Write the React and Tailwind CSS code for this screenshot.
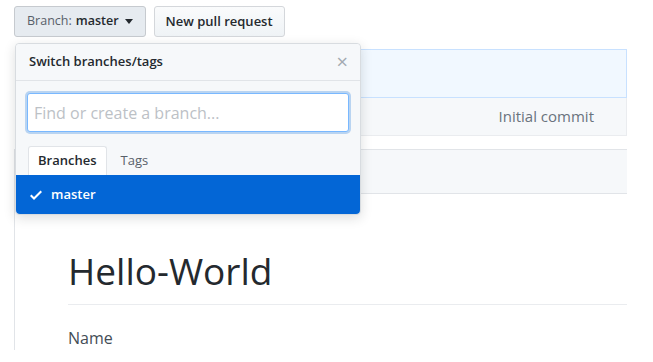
import React from 'react';

const Check = () => (
  <svg width="16" height="16" viewBox="0 0 12 16" fill="currentColor">
    <path fillRule="evenodd" d="M12 5l-8 8-4-4 1.5-1.5L4 10l6.5-6.5L12 5z" />
  </svg>
);

const App = () => {
  return (
    <div className="relative w-[653px] h-[362px] overflow-hidden bg-white text-[#24292e]" style={{ fontFamily: '"Open Sans", "Noto Sans", sans-serif' }}>
      <div className="flex gap-2 pl-[14px] pt-[6px]">
        <button className="h-[31px] px-[12px] flex items-center gap-[4px] text-[12.5px] border border-[#c6cacf] rounded-[3px] bg-[#e6ebf0]">
          <span className="text-[#586069]">Branch:</span>
          <span className="font-semibold">master</span>
          <span className="w-0 h-0 border-x-[4px] border-x-transparent border-t-[5px] border-t-[#24292e] ml-[2px]"></span>
        </button>
        <button className="h-[31px] px-[11px] text-[13px] font-semibold border border-[#d4d7db] rounded-[3px] bg-gradient-to-b from-[#fafbfc] to-[#eff3f6]">
          New pull request
        </button>
      </div>

      {/* file table behind */}
      <div className="ml-[15px] mt-[12px] w-[612px]">
        <div className="h-[49px] bg-[#f1f8ff] border border-[#c8e1ff]"></div>
        <div className="h-[38px] bg-[#f6f8fa] border-x border-b border-[#eaecef] flex items-center justify-end pr-[32px]">
          <span className="text-[15px] text-[#6a737d]">Initial commit</span>
        </div>
      </div>

      {/* readme */}
      <div className="ml-[14px] mt-[13px] w-[613px] border-l border-t border-[#e1e4e8]">
        <div className="h-[44px] bg-[#f6f8fa] border-b border-[#e1e4e8]"></div>
        <div className="pl-[53px] pt-[54px]">
          <h1 className="text-[37px] leading-[46px] pb-[10px] border-b border-[#eaecef]">Hello-World</h1>
          <p className="mt-[21px] text-[16px] text-[#444d56]">Name</p>
        </div>
      </div>

      {/* dropdown */}
      <div className="absolute left-[15px] top-[43px] w-[346px] bg-white border border-[#d8dce0] rounded-[4px] shadow-[0_3px_12px_rgba(27,31,35,0.15)]">
        <div className="h-[37px] flex items-center justify-between pl-[13px] pr-[12px] bg-[#f6f8fa] border-b border-[#e1e4e8] rounded-t-[4px]">
          <span className="text-[13px] font-semibold">Switch branches/tags</span>
          <span className="text-[#a3aab1] text-[20px] leading-none">×</span>
        </div>
        <div className="bg-[#f6f8fa] px-[11px] pt-[12px]">
          <div className="h-[39px] bg-white border border-[#79b8ff] rounded-[3px] shadow-[0_0_0_2px_rgba(3,102,214,0.25)] flex items-center pl-[6px]">
            <span className="text-[16px] text-[#bcc1c6]">Find or create a branch...</span>
          </div>
          <div className="flex items-end mt-[14px] pl-[1px]">
            <div className="h-[29px] px-[9px] flex items-center bg-white border-x border-t border-[#e1e4e8] rounded-t-[3px] text-[13px] font-semibold">Branches</div>
            <div className="h-[29px] px-[14px] flex items-center text-[13px] text-[#586069]">Tags</div>
          </div>
        </div>
        <div className="h-[39px] bg-[#0366d6] text-white flex items-center pl-[12px] gap-[7px] rounded-b-[4px]">
          <Check />
          <span className="text-[13px] font-semibold">master</span>
        </div>
      </div>
    </div>
  );
};

export default App;
